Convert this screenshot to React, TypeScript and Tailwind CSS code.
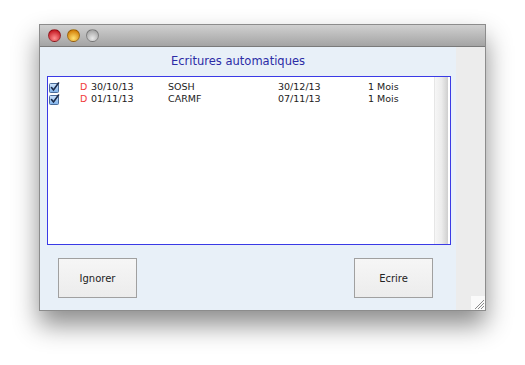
const rows = [
  { date: "30/10/13", name: "SOSH", end: "30/12/13", freq: "1 Mois" },
  { date: "01/11/13", name: "CARMF", end: "07/11/13", freq: "1 Mois" },
]

function CheckIcon() {
  return (
    <svg width="11" height="11" viewBox="0 0 11 11">
      <defs>
        <linearGradient id="cb" x1="0" y1="0" x2="0" y2="1">
          <stop offset="0" stopColor="#cfe4fb" />
          <stop offset="1" stopColor="#7fb2ea" />
        </linearGradient>
      </defs>
      <rect x="0.5" y="1.5" width="9" height="9" rx="1" fill="url(#cb)" stroke="#4a6c9a" />
      <path d="M2.5 5.5L4.5 8L9.5 1" stroke="#1b2a48" strokeWidth="1.6" fill="none" strokeLinecap="round" />
    </svg>
  )
}

function Light({ from, to }: { from: string; to: string }) {
  return (
    <div
      className="w-[13px] h-[13px] rounded-full border border-black/30"
      style={{ background: `radial-gradient(circle at 50% 75%, ${to} 0%, ${from} 85%)` }}
    />
  )
}

function Grip() {
  return (
    <svg width="14" height="14" viewBox="0 0 14 14">
      <rect width="14" height="14" fill="#fafafa" />
      <path d="M13 4L4 13M13 7L7 13M13 10L10 13" stroke="#8a8a8a" strokeWidth="1" />
    </svg>
  )
}

export default function App() {
  return (
    <div className="w-[525px] h-[365px] bg-white pt-[24px] pl-[39px]" style={{ fontFamily: '"DejaVu Sans", sans-serif' }}>
      <div className="w-[447px] h-[287px] flex flex-col border border-[#8c8c8c] shadow-[0_14px_24px_rgba(0,0,0,0.45)]">
        {/* title bar */}
        <div className="h-[22px] shrink-0 flex items-center gap-[6px] pl-[8px] bg-gradient-to-b from-[#d0d0d0] to-[#a4a4a4] border-b border-[#7a7a7a]">
          <Light from="#c0101a" to="#ff9090" />
          <Light from="#d07800" to="#ffe070" />
          <Light from="#a0a0a0" to="#e8e8e8" />
        </div>

        <div className="flex flex-1">
          {/* main area */}
          <div className="w-[416px] bg-[#e8f0f8] flex flex-col">
            <div className="h-[29px] flex items-center pl-[131px] text-[11.5px] text-[#2c2ca6] pt-[1px]">
              Ecritures automatiques
            </div>
            <div className="ml-[7px] w-[404px] h-[169px] border border-[#3a3ae6] bg-white flex">
              <div className="flex-1 pt-[4px] pl-[1px]">
                {rows.map((r) => (
                  <div key={r.name} className="h-[12px] flex items-center text-[9.5px] text-[#222] leading-none">
                    <div className="w-[31px]">
                      <CheckIcon />
                    </div>
                    <span className="w-[11px] text-[#f03a3a]">D</span>
                    <span className="w-[77px]">{r.date}</span>
                    <span className="w-[110px]">{r.name}</span>
                    <span className="w-[90px]">{r.end}</span>
                    <span>{r.freq}</span>
                  </div>
                ))}
              </div>
              <div className="w-[14px] mr-[2px] bg-gradient-to-r from-[#f6f6f6] via-[#ececec] to-[#cfcfcf] border-l border-[#e6e6e6]" />
            </div>
            <div className="flex justify-between pl-[18px] pr-[23px] pt-[13px]">
              <button className="w-[79px] h-[40px] border border-[#a0a0a0] bg-gradient-to-b from-[#f6f6f6] to-[#ececec] text-[10px] text-[#222]">
                Ignorer
              </button>
              <button className="w-[79px] h-[40px] border border-[#a0a0a0] bg-gradient-to-b from-[#f6f6f6] to-[#ececec] text-[10px] text-[#222]">
                Ecrire
              </button>
            </div>
          </div>
          {/* right strip */}
          <div className="flex-1 bg-[#ececec] flex flex-col justify-end items-end">
            <Grip />
          </div>
        </div>
      </div>
    </div>
  )
}
